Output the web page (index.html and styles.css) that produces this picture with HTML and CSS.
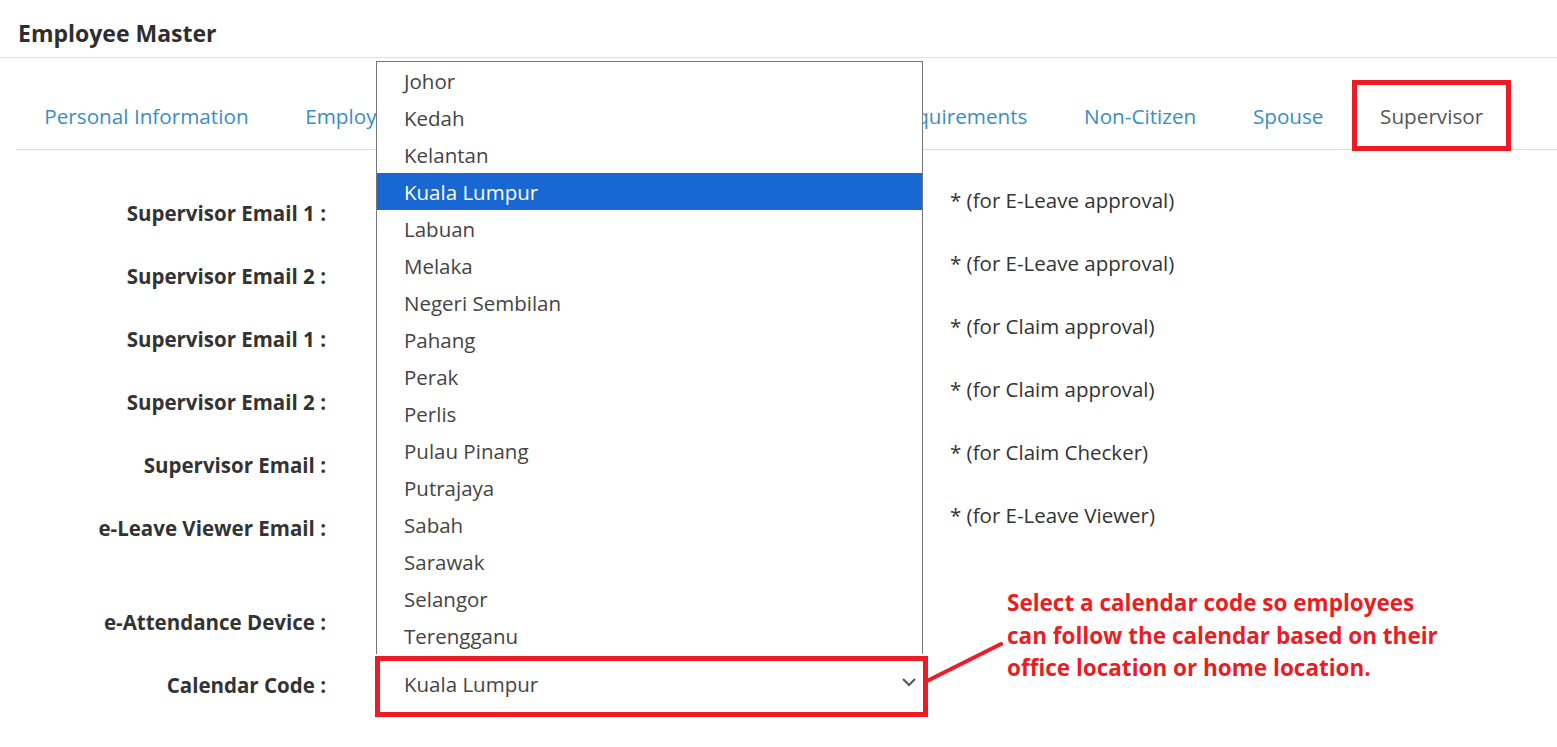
FILE: index.html
```html
<!DOCTYPE html>
<html lang="en">
<head>
<meta charset="utf-8">
<title>Employee Master</title>
<link rel="stylesheet" href="styles.css">
</head>
<body>
<div class="page">
  <header class="title-bar">
    <h1 class="title">Employee Master</h1>
  </header>

  <nav class="tabs">
    <a class="tab">Personal Information</a>
    <a class="tab">Employment Information</a>
    <a class="tab">Payroll Details</a>
    <a class="tab">Statutory Requirements</a>
    <a class="tab">Non-Citizen</a>
    <a class="tab">Spouse</a>
    <a class="tab tab-active">Supervisor</a>
  </nav>

  <form class="form-grid">
    <label class="label">Supervisor Email 1 :</label>
    <input class="field" type="text">
    <span class="note">* (for E-Leave approval)</span>

    <label class="label">Supervisor Email 2 :</label>
    <input class="field" type="text">
    <span class="note">* (for E-Leave approval)</span>

    <label class="label">Supervisor Email 1 :</label>
    <input class="field" type="text">
    <span class="note">* (for Claim approval)</span>

    <label class="label">Supervisor Email 2 :</label>
    <input class="field" type="text">
    <span class="note">* (for Claim approval)</span>

    <label class="label">Supervisor Email :</label>
    <input class="field" type="text">
    <span class="note">* (for Claim Checker)</span>

    <label class="label">e-Leave Viewer Email :</label>
    <input class="field" type="text">
    <span class="note">* (for E-Leave Viewer)</span>

    <div class="spacer"></div>

    <label class="label">e-Attendance Device :</label>
    <input class="field" type="text">

    <div class="annotation">
      <svg class="connector" width="78" height="44" viewBox="0 0 78 44">
        <line x1="1" y1="40" x2="75" y2="3" stroke="#ec1c24" stroke-width="4" stroke-linecap="round"/>
      </svg>
      <p class="annotation-text">Select a calendar code so employees can follow the calendar based on their office location or home location.</p>
    </div>

    <label class="label label-last">Calendar Code :</label>
    <div class="select-box">
      <span class="select-value">Kuala Lumpur</span>
      <svg class="chevron" width="16" height="10" viewBox="0 0 16 10">
        <polyline points="2,2 8,8 14,2" fill="none" stroke="#555" stroke-width="2"/>
      </svg>
    </div>
  </form>

  <ul class="dropdown">
    <li class="option">Johor</li>
    <li class="option">Kedah</li>
    <li class="option">Kelantan</li>
    <li class="option option-selected">Kuala Lumpur</li>
    <li class="option">Labuan</li>
    <li class="option">Melaka</li>
    <li class="option">Negeri Sembilan</li>
    <li class="option">Pahang</li>
    <li class="option">Perak</li>
    <li class="option">Perlis</li>
    <li class="option">Pulau Pinang</li>
    <li class="option">Putrajaya</li>
    <li class="option">Sabah</li>
    <li class="option">Sarawak</li>
    <li class="option">Selangor</li>
    <li class="option">Terengganu</li>
  </ul>
</div>
</body>
</html>
```

FILE: styles.css
```css
* { box-sizing: border-box; }

html, body {
  margin: 0;
  padding: 0;
  background: #ffffff;
}

body {
  font-family: "Open Sans", "Liberation Sans", sans-serif;
  color: #333333;
  width: 1557px;
  height: 747px;
  overflow: hidden;
}

.page {
  position: relative;
  width: 1557px;
  height: 747px;
}

.title-bar {
  height: 58px;
  padding: 18px 18px 0;
  border-bottom: 1px solid #dfe6d6;
}

.title {
  margin: 0;
  font-size: 23px;
  line-height: 30px;
  font-weight: 700;
  color: #2e2e2e;
}

.tabs {
  display: flex;
  margin-left: 16px;
  padding-top: 22px;
  border-bottom: 1px solid #dddddd;
}

.tab {
  display: block;
  padding: 19px 23.3px 17px;
  border: 5px solid transparent;
  margin-bottom: -2px;
  font-size: 20.7px;
  line-height: 25px;
  color: #3a8dc6;
  white-space: nowrap;
}

.tab-active {
  border-color: #ec1c24;
  color: #555555;
}

.form-grid {
  display: grid;
  grid-template-columns: 326px 597px 1fr;
  grid-template-rows: repeat(6, 63px) 31px 63px 63px;
  margin: 0;
  padding-top: 31px;
}

.label {
  grid-column: 1;
  align-self: center;
  text-align: right;
  font-size: 20.5px;
  line-height: 24px;
  font-weight: 700;
  color: #333333;
  white-space: nowrap;
}

.field {
  grid-column: 2;
  margin-left: 50px;
  width: 547px;
  height: 40px;
  align-self: center;
  border: 1px solid #cccccc;
  background: #ffffff;
}

.note {
  grid-column: 3;
  align-self: start;
  margin-top: 7px;
  padding-left: 27px;
  font-size: 20.5px;
  line-height: 24px;
  color: #333333;
  white-space: nowrap;
}

.spacer {
  grid-column: 1 / -1;
}

.annotation {
  grid-column: 3;
  grid-row: 8 / 10;
  position: relative;
  padding-left: 84px;
}

.connector {
  position: absolute;
  left: 3px;
  top: 51px;
}

.annotation-text {
  margin: -3px 0 0;
  width: 440px;
  font-size: 22.5px;
  line-height: 32.5px;
  font-weight: 700;
  color: #ec1c24;
}

.label-last {
  grid-row: 9;
}

.select-box {
  grid-column: 2;
  grid-row: 9;
  align-self: end;
  margin-left: 49px;
  width: 553px;
  height: 61px;
  margin-bottom: -1px;
  border: 5px solid #ec1c24;
  display: flex;
  align-items: center;
  justify-content: space-between;
  padding: 0 6px 4px 24px;
  background: #ffffff;
}

.select-value {
  font-size: 20.5px;
  line-height: 25px;
  color: #444444;
}

.chevron {
  display: block;
  margin-top: -5px;
}

.dropdown {
  position: absolute;
  left: 376px;
  top: 61px;
  width: 547px;
  margin: 0;
  padding: 0;
  list-style: none;
  border: 1px solid #767676;
  border-bottom: none;
  background: #ffffff;
}

.option {
  height: 37px;
  line-height: 38px;
  padding-left: 27px;
  font-size: 20.5px;
  color: #444444;
}

.option-selected {
  background: #1967d2;
  color: #ffffff;
}
```
